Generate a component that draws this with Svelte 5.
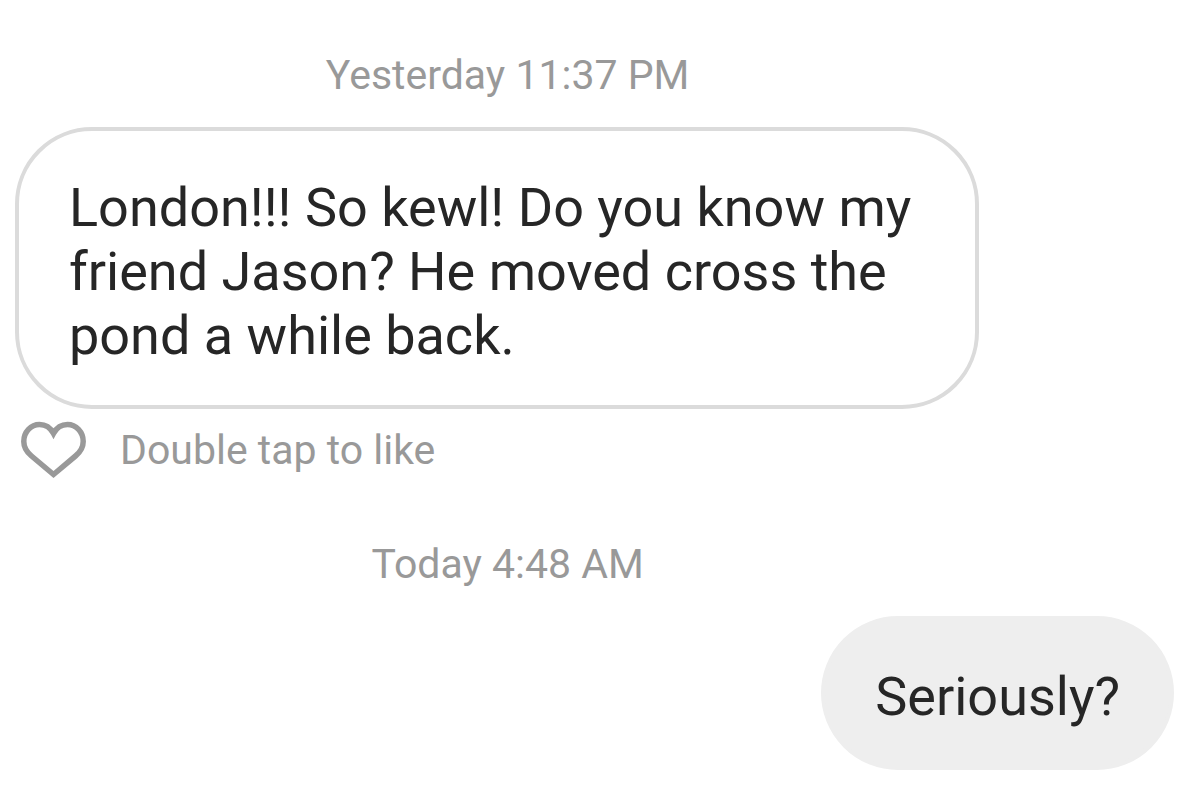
<script>
  let messages = [
    { time: 'Yesterday 11:37 PM', text: 'London!!! So kewl! Do you know my friend Jason? He moved cross the pond a while back.', mine: false },
    { time: 'Today 4:48 AM', text: 'Seriously?', mine: true }
  ];
</script>

<main>
  {#each messages as message}
    <section>
      <time>{message.time}</time>
      <p class="bubble" class:mine={message.mine}>{message.text}</p>
      {#if !message.mine}
        <button class="like">
          <svg viewBox="0 0 67 58" width="67" height="58" aria-hidden="true">
            <path d="M33.5 53.5 L11.5 35 C6 30.5 3.8 26 3.8 20.5 C3.8 11 11 3.6 19.5 3.6 C25.5 3.6 30.5 7 33.5 12.5 C36.5 7 41.5 3.6 47.5 3.6 C56 3.6 63.2 11 63.2 20.5 C63.2 26 61 30.5 55.5 35 Z" />
          </svg>
          <span>Double tap to like</span>
        </button>
      {/if}
    </section>
  {/each}
</main>

<style>
  :global(body) {
    margin: 0;
    background: #fff;
  }

  main {
    padding: 50px 26px 32px 15px;
    font-family: Roboto, sans-serif;
    color: #262626;
  }

  section {
    display: flex;
    flex-direction: column;
    align-items: flex-start;
    margin-bottom: 60px;
  }

  section:last-child {
    margin-bottom: 0;
  }

  time {
    width: 85%;
    margin-bottom: 27px;
    font-size: 41px;
    line-height: 50px;
    text-align: center;
    color: #999;
  }

  .bubble {
    box-sizing: border-box;
    max-width: 964px;
    margin: 0;
    padding: 45px 50px 37px;
    border: 4px solid #dbdbdb;
    border-radius: 77px;
    font-size: 54px;
    line-height: 64px;
  }

  .mine {
    align-self: flex-end;
    border-color: #eee;
    background: #eee;
  }

  .like {
    display: flex;
    align-items: center;
    gap: 33px;
    margin-top: 12px;
    padding: 0 5px;
    border: 0;
    background: none;
    font-family: inherit;
    font-size: 41px;
    line-height: 58px;
    color: #999;
    cursor: pointer;
  }

  .like svg {
    fill: none;
    stroke: #999;
    stroke-width: 5.5;
    stroke-linejoin: miter;
  }
</style>
